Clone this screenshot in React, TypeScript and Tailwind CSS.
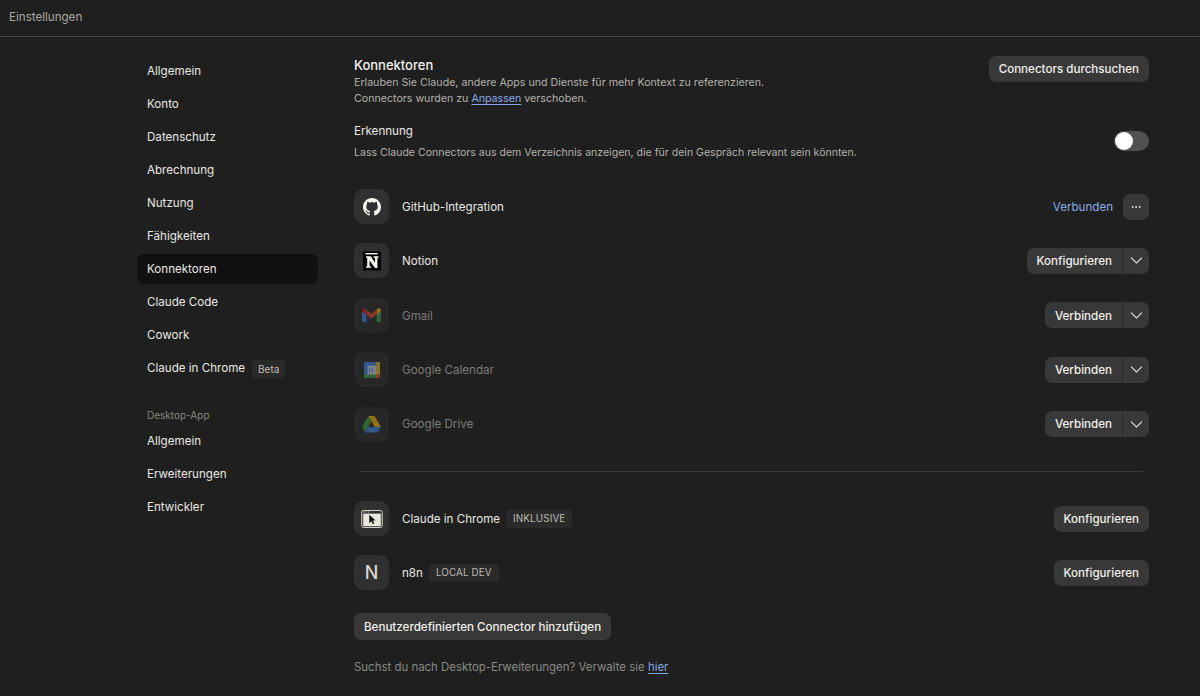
import React from "react";
import { Ellipsis } from "lucide-react";

const NAV = ["Allgemein", "Konto", "Datenschutz", "Abrechnung", "Nutzung", "Fähigkeiten", "Konnektoren", "Claude Code", "Cowork"];
const DESKTOP_NAV = ["Allgemein", "Erweiterungen", "Entwickler"];

const GithubIcon = () => (
  <svg viewBox="0 0 16 16" className="h-[18px] w-[18px]" fill="#f2f2ee">
    <path d="M8 0C3.58 0 0 3.58 0 8c0 3.54 2.29 6.53 5.47 7.59.4.07.55-.17.55-.38 0-.19-.01-.82-.01-1.49-2.01.37-2.53-.49-2.69-.94-.09-.23-.48-.94-.82-1.13-.28-.15-.68-.52-.01-.53.63-.01 1.08.58 1.23.82.72 1.21 1.87.87 2.33.66.07-.52.28-.87.51-1.07-1.78-.2-3.64-.89-3.64-3.95 0-.87.31-1.59.82-2.15-.08-.2-.36-1.02.08-2.12 0 0 .67-.21 2.2.82.64-.18 1.32-.27 2-.27s1.36.09 2 .27c1.53-1.04 2.2-.82 2.2-.82.44 1.1.16 1.92.08 2.12.51.56.82 1.27.82 2.15 0 3.07-1.87 3.75-3.65 3.95.29.25.54.73.54 1.48 0 1.07-.01 1.93-.01 2.2 0 .21.15.46.55.38A8.01 8.01 0 0 0 16 8c0-4.42-3.58-8-8-8z" />
  </svg>
);

const NotionIcon = () => (
  <svg viewBox="0 0 20 20" className="h-[20px] w-[20px]">
    <rect x="1" y="0.5" width="18" height="19" rx="1" fill="#000" />
    <path d="M3.4 2h12.2v1.4H3.4z" fill="#f5f5f0" />
    <path
      d="M4 5.2h4.8l4.2 6.6V7l-1.4-.4V5.2h5V6.6l-1.2.4v10h-2.4L7.6 9.6v5.6l1.6.4v1.2H4v-1.2l1.2-.4V7L4 6.6z"
      fill="#f5f5f0"
    />
  </svg>
);

const GmailIcon = () => (
  <svg viewBox="0 0 20 16" className="h-[15px] w-[19px]" fill="none">
    <path d="M1.4 15h3.2V7.2L0 3.8V13.6c0 .8.6 1.4 1.4 1.4z" fill="#4285f4" />
    <path d="M15.4 15h3.2c.8 0 1.4-.6 1.4-1.4V3.8l-4.6 3.4z" fill="#34a853" />
    <path d="M15.4 1.8v5.4L20 3.8V2.2C20 .5 18 -.5 16.7.6z" fill="#fbbc04" />
    <path d="M4.6 7.2V1.8L10 5.8l5.4-4v5.4L10 11.2z" fill="#ea4335" />
    <path d="M0 2.2v1.6l4.6 3.4V1.8L3.3.6C2 -.5 0 .5 0 2.2z" fill="#c5221f" />
  </svg>
);

const CalendarIcon = () => (
  <svg viewBox="0 0 18 18" className="h-[16px] w-[16px]">
    <rect x="0" y="0" width="18" height="18" rx="1.5" fill="#fbbc04" />
    <rect x="0" y="0" width="14" height="14" fill="#4285f4" rx="1.5" />
    <rect x="0" y="14" width="14" height="4" fill="#34a853" />
    <rect x="4" y="4" width="10" height="10" fill="#e8eaf6" opacity="0.85" />
    <rect x="14" y="14" width="4" height="4" fill="#ea4335" />
    <path d="M6.3 6.5v5M9.3 6.5v5" stroke="#4285f4" strokeWidth="1.1" />
  </svg>
);

const DriveIcon = () => (
  <svg viewBox="0 0 20 18" className="h-[17px] w-[19px]">
    <path d="M6.7 0h6.6l6.7 11.6h-6.6z" fill="#fbbc04" />
    <path d="M6.7 0 0 11.6l3.3 5.8 6.7-11.6z" fill="#34a853" />
    <path d="M3.3 17.4h13.4l3.3-5.8H6.6z" fill="#4285f4" />
  </svg>
);

const ChromeIcon = () => (
  <svg viewBox="0 0 24 20" className="h-[18px] w-[22px]">
    <rect x="0.6" y="0.6" width="22.8" height="18.8" rx="2" fill="none" stroke="#e9e7dc" strokeWidth="1" />
    <rect x="2.2" y="4" width="19.6" height="14" fill="#e9e7dc" />
    <path d="M2.4 2.2h1.2M5 2.2h1.2M7.6 2.2h1.2" stroke="#e9e7dc" strokeWidth="1" />
    <path d="M9 5.4v9.2l2.3-2.1 1.6 3.2 1.6-.8-1.6-3.1h3.1z" fill="#111" />
  </svg>
);

// lucide's chevron is too narrow here, the picture has a wide thin one
const Chevron = () => (
  <svg viewBox="0 0 14 8" className="h-[7px] w-[13px]" fill="none" stroke="#f2f1ec" strokeWidth="1.2">
    <path d="M0.8 0.8 7 7l6.2-6.2" />
  </svg>
);

const IconBox = ({ children, dim }: { children: React.ReactNode; dim?: boolean }) => (
  <div className={`flex h-[35px] w-[35px] shrink-0 items-center justify-center rounded-[9px] ${dim ? "bg-[#272727]" : "bg-[#303030]"}`}>
    <div className={`flex items-center justify-center ${dim ? "opacity-50" : ""}`}>{children}</div>
  </div>
);

const SplitButton = ({ label }: { label: string }) => (
  <div className="flex h-[26px] items-center rounded-[7px] bg-[#383838] text-[11.6px] font-medium text-[#f2f1ec]">
    <span className="flex h-full items-center px-[10px] pt-[2px]">{label}</span>
    <span className="h-full w-px bg-[#2a2a2a]" />
    <span className="flex h-full w-[26px] items-center justify-center">
      <Chevron />
    </span>
  </div>
);

const PlainButton = ({ label }: { label: string }) => (
  <button className="flex h-[26px] items-center rounded-[7px] bg-[#383838] px-[10px] pt-[2px] text-[11.6px] font-medium text-[#f2f1ec]">
    {label}
  </button>
);

const Tag = ({ label }: { label: string }) => (
  <span className="ml-[6px] flex h-[18px] items-center rounded-[4px] bg-[#2a2a2a] px-[7px] pt-[1px] text-[9.8px] tracking-[0.15px] text-[#bdbcb6]">
    {label}
  </span>
);

const Row = ({
  icon,
  name,
  dim,
  tag,
  right,
}: {
  icon: React.ReactNode;
  name: string;
  dim?: boolean;
  tag?: string;
  right: React.ReactNode;
}) => (
  <div className="flex h-[35px] items-center">
    <IconBox dim={dim}>{icon}</IconBox>
    <span className={`ml-[13px] pt-[2px] text-[11.6px] ${dim ? "text-[#7c7c78]" : "text-[#e8e7e2]"}`}>{name}</span>
    {tag && <Tag label={tag} />}
    <div className="ml-auto flex items-center">{right}</div>
  </div>
);

export default function App() {
  return (
    <div className="h-[696px] w-[1200px] overflow-hidden bg-[#1f1f1f] font-['Inter',sans-serif]">
      <header className="flex h-[37px] items-center border-b border-[#464646] pb-[1px] pl-[9px] text-[11.6px] text-[#a9a8a3]">
        Einstellungen
      </header>
      <div className="flex pl-[137px] pr-[51px]">
        {/* sidebar */}
        <nav className="w-[181px] shrink-0 pt-[19px] text-[11.6px] text-[#e8e7e2]">
          <div className="flex flex-col gap-[3px]">
            {NAV.map((item) => (
              <div
                key={item}
                className={`flex h-[30px] items-center rounded-[7px] px-[10px] pt-[2px] ${item === "Konnektoren" ? "bg-[#111111]" : ""}`}
              >
                {item}
              </div>
            ))}
            <div className="flex h-[30px] items-center px-[10px] pt-[2px]">
              Claude in Chrome
              <span className="ml-[7px] flex h-[18px] items-center rounded-[4px] bg-[#2a2a2a] px-[6px] text-[10px] text-[#bdbcb6]">
                Beta
              </span>
            </div>
          </div>
          <div className="mt-[25px] px-[10px] text-[10px] text-[#868682]">Desktop-App</div>
          <div className="mt-[2.5px] flex flex-col gap-[3px]">
            {DESKTOP_NAV.map((item) => (
              <div key={item} className="flex h-[30px] items-center px-[10px] pt-[2px]">
                {item}
              </div>
            ))}
          </div>
        </nav>

        {/* main */}
        <main className="ml-[36px] flex-1 pt-[19px]">
          <div className="flex items-start justify-between">
            <div>
              <h1 className="text-[13px] leading-[18px] font-medium text-[#f2f1ec]">Konnektoren</h1>
              <p className="mt-[1px] text-[10.65px] leading-[16px] text-[#b2b1ab]">
                Erlauben Sie Claude, andere Apps und Dienste für mehr Kontext zu referenzieren.
              </p>
              <p className="text-[10.65px] leading-[16px] text-[#b2b1ab]">
                Connectors wurden zu <span className="text-[#86a9e6] underline underline-offset-2">Anpassen</span> verschoben.
              </p>
            </div>
            <PlainButton label="Connectors durchsuchen" />
          </div>

          <div className="mt-[15px] flex items-start justify-between">
            <div>
              <div className="text-[11.6px] leading-[18px] text-[#e8e7e2]">Erkennung</div>
              <div className="mt-[4.5px] text-[10.55px] leading-[16px] text-[#b2b1ab]">
                Lass Claude Connectors aus dem Verzeichnis anzeigen, die für dein Gespräch relevant sein könnten.
              </div>
            </div>
            <div className="mt-[9px] flex h-[20px] w-[35px] items-center rounded-full bg-[#515151] px-[1px]">
              <span className="h-[18px] w-[18px] rounded-full bg-white" />
            </div>
          </div>

          <div className="mt-[28.5px] flex flex-col gap-[19.4px]">
            <Row
              icon={<GithubIcon />}
              name="GitHub-Integration"
              right={
                <>
                  <span className="mr-[10px] pt-[2px] text-[11.6px] text-[#86a9e6]">Verbunden</span>
                  <span className="flex h-[26px] w-[26px] items-center justify-center rounded-[7px] bg-[#383838] text-[#e8e7e2]">
                    <Ellipsis size={12} />
                  </span>
                </>
              }
            />
            <Row icon={<NotionIcon />} name="Notion" right={<SplitButton label="Konfigurieren" />} />
            <Row icon={<GmailIcon />} name="Gmail" dim right={<SplitButton label="Verbinden" />} />
            <Row icon={<CalendarIcon />} name="Google Calendar" dim right={<SplitButton label="Verbinden" />} />
            <Row icon={<DriveIcon />} name="Google Drive" dim right={<SplitButton label="Verbinden" />} />
          </div>

          <div className="mx-[6px] mt-[29px] mb-[29.5px] h-px bg-[#383838]" />

          <div className="flex flex-col gap-[19.4px]">
            <Row icon={<ChromeIcon />} name="Claude in Chrome" tag="INKLUSIVE" right={<PlainButton label="Konfigurieren" />} />
            <Row
              icon={<span className="text-[18px] font-medium text-[#d6d5cf]">N</span>}
              name="n8n"
              tag="LOCAL DEV"
              right={<PlainButton label="Konfigurieren" />}
            />
          </div>

          <button className="mt-[22.5px] flex h-[27px] items-center rounded-[7px] bg-[#383838] px-[10px] pt-[2px] text-[11.6px] font-medium text-[#f2f1ec]">
            Benutzerdefinierten Connector hinzufügen
          </button>

          <p className="mt-[19.5px] text-[11.45px] text-[#8a8a86]">
            Suchst du nach Desktop-Erweiterungen? Verwalte sie{" "}
            <span className="text-[#86a9e6] underline underline-offset-2">hier</span>
          </p>
        </main>
      </div>
    </div>
  );
}
